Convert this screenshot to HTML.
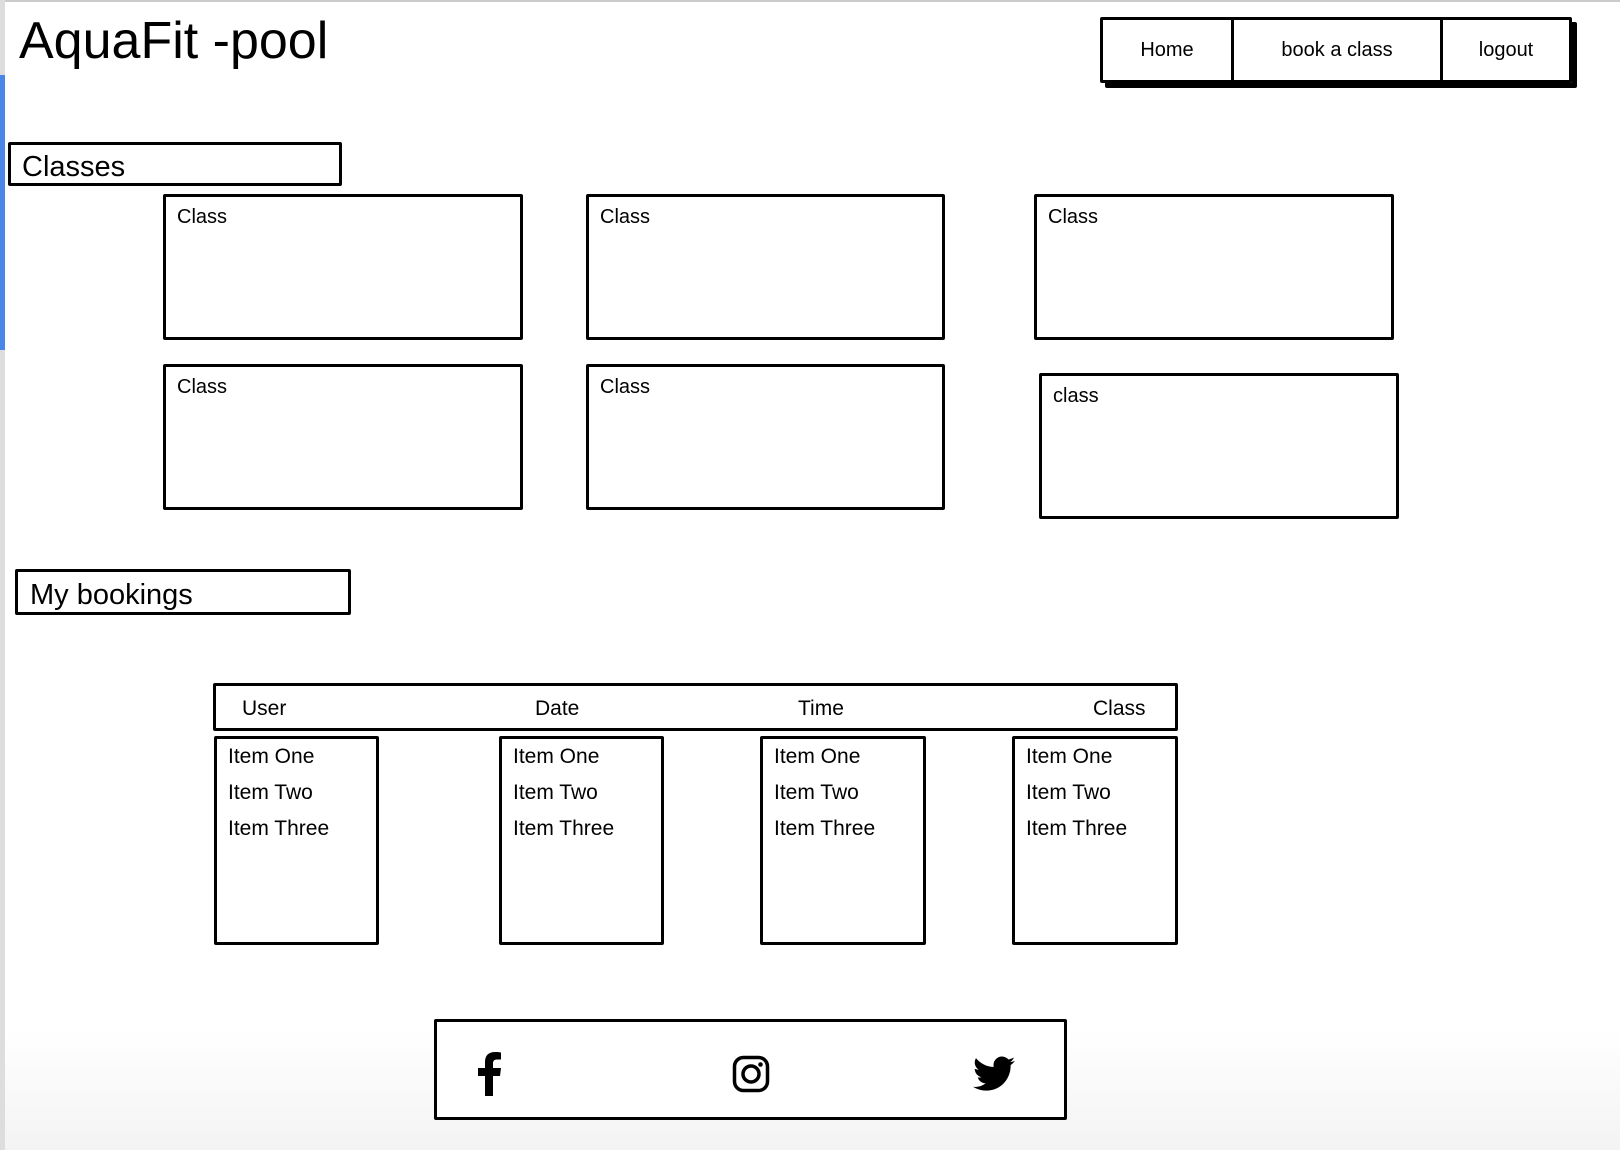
<!DOCTYPE html>
<html><head><meta charset="utf-8"><style>
body{margin:0;width:1620px;height:1150px;position:relative;overflow:hidden;background:linear-gradient(#fff 0,#fff 1030px,#f3f3f3 1150px);font-family:"Liberation Sans",sans-serif;color:#000}
.b{position:absolute;border:3px solid #000;box-sizing:border-box;border-radius:2px}
.t{position:absolute;white-space:nowrap}
.card .t{left:11px;top:9px;font-size:20px}
.li{font-size:21px;line-height:36px;position:absolute;left:11px;top:0px}
</style></head><body>
<div style="position:absolute;left:0;top:0;width:1620px;height:2px;background:#ccc"></div>
<div style="position:absolute;left:0;top:0;width:5px;height:1150px;background:#ddd"></div>
<div style="position:absolute;left:0;top:75px;width:5px;height:275px;background:#4a86e8"></div>
<div class="t" style="left:19px;top:11px;font-size:52px">AquaFit -pool</div>

<div class="b" style="left:1100px;top:17px;width:472px;height:66px;box-shadow:5px 5px 0 #000;display:flex">
 <div style="width:128px;border-right:3px solid #000;display:flex;align-items:center;justify-content:center;font-size:20px">Home</div>
 <div style="width:206px;border-right:3px solid #000;display:flex;align-items:center;justify-content:center;font-size:20px">book a class</div>
 <div style="flex:1;display:flex;align-items:center;justify-content:center;font-size:20px">logout</div>
</div>

<div class="b" style="left:8px;top:142px;width:334px;height:44px"><div class="t" style="left:11px;top:6px;font-size:29px">Classes</div></div>

<div class="b card" style="left:163px;top:194px;width:360px;height:146px"><div class="t">Class</div></div>
<div class="b card" style="left:586px;top:194px;width:359px;height:146px"><div class="t">Class</div></div>
<div class="b card" style="left:1034px;top:194px;width:360px;height:146px"><div class="t">Class</div></div>
<div class="b card" style="left:163px;top:364px;width:360px;height:146px"><div class="t">Class</div></div>
<div class="b card" style="left:586px;top:364px;width:359px;height:146px"><div class="t">Class</div></div>
<div class="b card" style="left:1039px;top:373px;width:360px;height:146px"><div class="t">class</div></div>

<div class="b" style="left:15px;top:569px;width:336px;height:46px"><div class="t" style="left:12px;top:7px;font-size:29px">My bookings</div></div>

<div class="b" style="left:213px;top:683px;width:965px;height:48px">
 <div class="t" style="left:26px;top:11px;font-size:21px">User</div>
 <div class="t" style="left:319px;top:11px;font-size:21px">Date</div>
 <div class="t" style="left:582px;top:11px;font-size:21px">Time</div>
 <div class="t" style="left:877px;top:11px;font-size:21px">Class</div>
</div>
<div class="b" style="left:214px;top:736px;width:165px;height:209px"><div class="li">Item One<br>Item Two<br>Item Three</div></div>
<div class="b" style="left:499px;top:736px;width:165px;height:209px"><div class="li">Item One<br>Item Two<br>Item Three</div></div>
<div class="b" style="left:760px;top:736px;width:166px;height:209px"><div class="li">Item One<br>Item Two<br>Item Three</div></div>
<div class="b" style="left:1012px;top:736px;width:166px;height:209px"><div class="li">Item One<br>Item Two<br>Item Three</div></div>

<div class="b" style="left:434px;top:1019px;width:633px;height:101px;background:#fff">
 <svg style="position:absolute;left:38px;top:30px" width="28" height="44" viewBox="0 0 28 44"><path d="M10 44V24H3v-8h7v-6c0-7 4-10 10-10 3 0 5 0.3 6 0.5v7h-4c-3 0-4 1.5-4 4v4.5h8l-1 8h-7v20z" fill="#000"/></svg>
 <svg style="position:absolute;left:295px;top:33px" width="38" height="38" viewBox="0 0 38 38"><rect x="2.5" y="2.5" width="33" height="33" rx="9" fill="none" stroke="#000" stroke-width="3.5"/><circle cx="19" cy="19" r="8" fill="none" stroke="#000" stroke-width="3.5"/><circle cx="28.5" cy="9.5" r="2.3" fill="#000"/></svg>
 <svg style="position:absolute;left:536px;top:34px" width="42" height="36" viewBox="0 0 24 20"><path d="M24 2.4c-.9.4-1.8.7-2.8.8 1-.6 1.8-1.6 2.2-2.7-1 .6-2 1-3.1 1.2C19.3.7 18 0 16.6 0c-2.7 0-4.9 2.2-4.9 4.9 0 .4 0 .8.1 1.1C7.7 5.8 4.1 3.900 1.7.9c-.4.7-.7 1.6-.7 2.5 0 1.7.9 3.2 2.2 4.1-.8 0-1.600-.2-2.2-.6v.1c0 2.4 1.7 4.4 3.9 4.8-.4.1-.8.2-1.3.2-.3 0-.6 0-.9-.1.6 2 2.4 3.4 4.6 3.4-1.7 1.3-3.8 2.1-6.1 2.1-.4 0-.8 0-1.2-.1 2.2 1.4 4.8 2.2 7.5 2.2 9.1 0 14-7.5 14-14v-.6c1-.7 1.8-1.6 2.5-2.5z" fill="#000"/></svg>
</div>
</body></html>
